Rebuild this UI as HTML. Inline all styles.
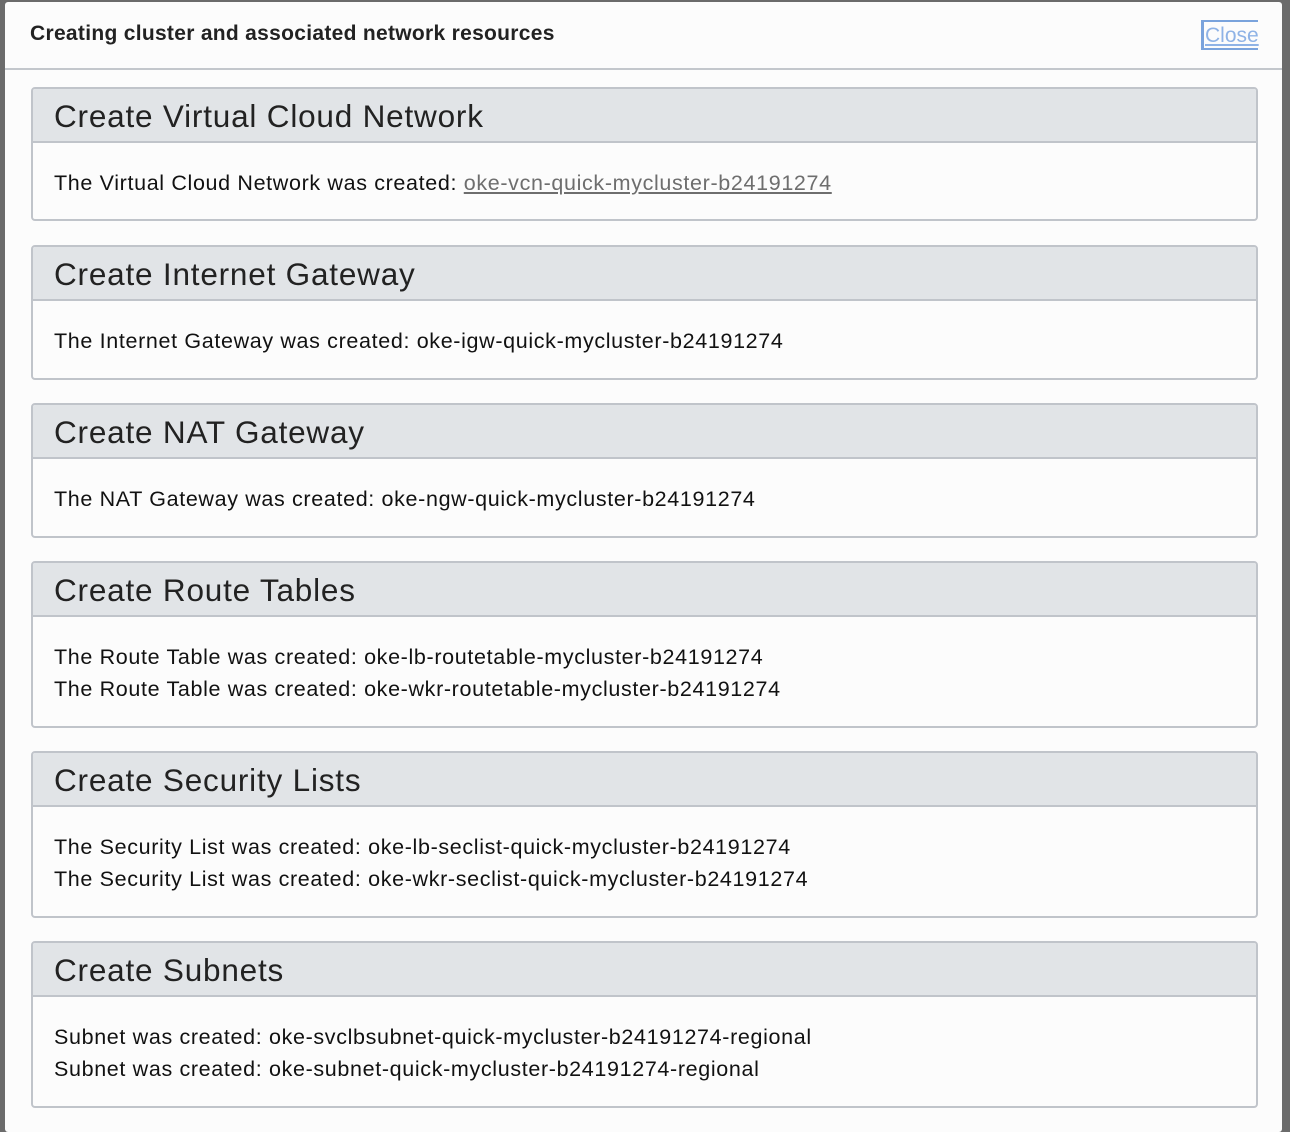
<!DOCTYPE html>
<html><head><meta charset="utf-8"><style>
*{box-sizing:border-box;margin:0;padding:0}
html,body{width:1290px;height:1120px;overflow:hidden;background:#6b6b6b;font-family:"Liberation Sans",Arial,sans-serif}
.modal{position:absolute;left:5px;top:2px;width:1277px;height:1130px;background:#fcfcfc;border-radius:3px}
.hd{position:absolute;left:0;top:0;width:100%;height:68px;border-bottom:2px solid #c3c7cc}
.hd h1{position:absolute;left:25px;top:20px;font-size:21px;letter-spacing:0.3px;color:#222;font-weight:bold}
.close{position:absolute;left:1196px;top:18px;width:57px;height:30px;border-left:3px solid #7aa3dc;border-top:2px solid #7aa3dc;border-bottom:2px solid #7aa3dc;color:#8fb3e6;font-size:21px;line-height:28px;padding-left:1px;text-decoration:underline}
.box{position:absolute;left:26px;width:1227px;border:2px solid #c0c4ca;border-radius:4px;background:#fcfcfc;overflow:hidden}
.box .t{height:54px;background:#e1e4e7;border-bottom:2px solid #c0c4ca;font-size:31.5px;letter-spacing:0.8px;color:#222;padding-left:21px;line-height:54px}
.box .b{padding:24px 21px 0;font-size:21.5px;letter-spacing:0.65px;line-height:32px;color:#111}
a.l{color:#6e6e6e;text-decoration:underline}
</style></head><body>
<div class="modal">
<div class="hd"><h1>Creating cluster and associated network resources</h1><div class="close">Close</div></div>
<div class="box" style="top:85px;height:134px"><div class="t">Create Virtual Cloud Network</div><div class="b">The Virtual Cloud Network was created: <a class="l">oke-vcn-quick-mycluster-b24191274</a></div></div>
<div class="box" style="top:243px;height:135px"><div class="t">Create Internet Gateway</div><div class="b">The Internet Gateway was created: oke-igw-quick-mycluster-b24191274</div></div>
<div class="box" style="top:401px;height:135px"><div class="t">Create NAT Gateway</div><div class="b">The NAT Gateway was created: oke-ngw-quick-mycluster-b24191274</div></div>
<div class="box" style="top:559px;height:167px"><div class="t">Create Route Tables</div><div class="b">The Route Table was created: oke-lb-routetable-mycluster-b24191274<br>The Route Table was created: oke-wkr-routetable-mycluster-b24191274</div></div>
<div class="box" style="top:749px;height:167px"><div class="t">Create Security Lists</div><div class="b">The Security List was created: oke-lb-seclist-quick-mycluster-b24191274<br>The Security List was created: oke-wkr-seclist-quick-mycluster-b24191274</div></div>
<div class="box" style="top:939px;height:167px"><div class="t">Create Subnets</div><div class="b">Subnet was created: oke-svclbsubnet-quick-mycluster-b24191274-regional<br>Subnet was created: oke-subnet-quick-mycluster-b24191274-regional</div></div>
</div>
</body></html>
